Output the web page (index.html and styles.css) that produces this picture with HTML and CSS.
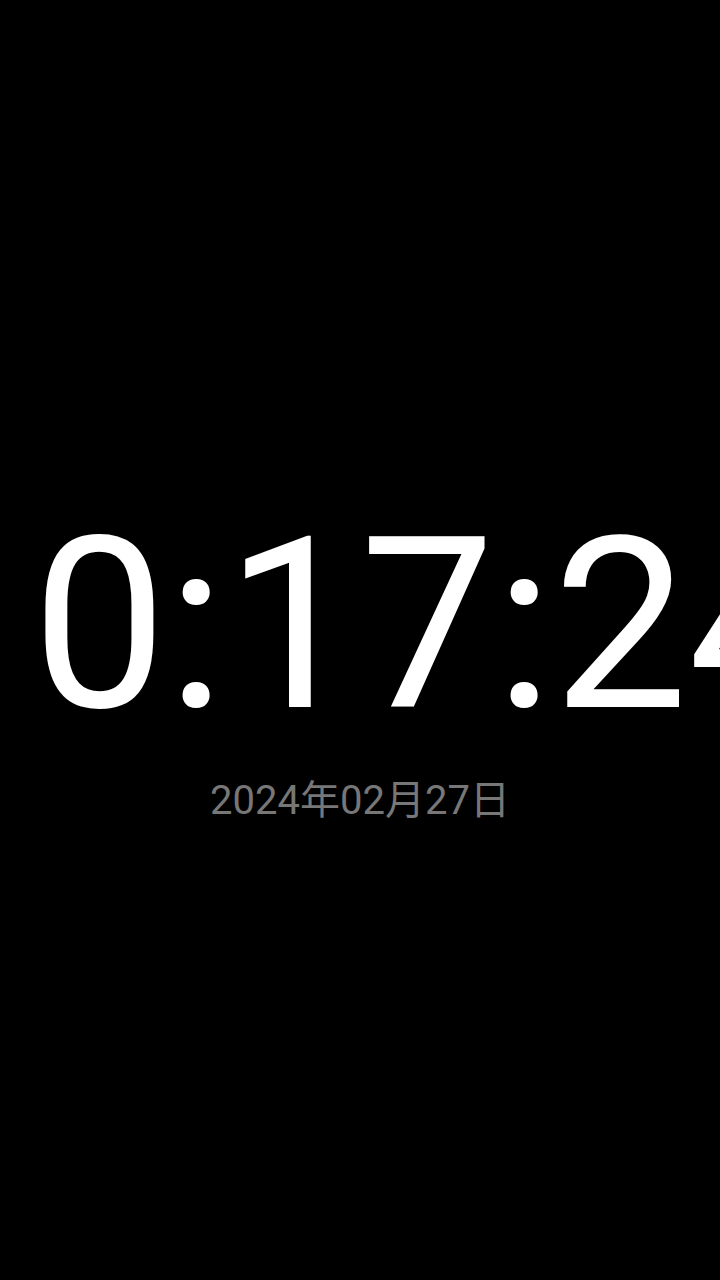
FILE: index.html
```html
<!DOCTYPE html>
<html lang="zh">
<head>
<meta charset="utf-8">
<title>Clock</title>
<link rel="stylesheet" href="styles.css">
</head>
<body>
<main class="screen">
  <div class="time-row">
    <div class="time">00:17:24</div>
  </div>
  <div class="date">2024年02月27日</div>
</main>
</body>
</html>
```

FILE: styles.css
```css
html, body {
  margin: 0;
  padding: 0;
  background: #000;
}
.screen {
  width: 720px;
  height: 1280px;
  box-sizing: border-box;
  padding-top: 505px;
  display: flex;
  flex-direction: column;
  align-items: center;
  overflow: hidden;
  background: #000;
  font-family: Roboto, "Noto Sans CJK SC", sans-serif;
}
.time-row {
  align-self: stretch;
  display: flex;
  justify-content: center;
  clip-path: inset(0 0 0 32px);
}
.time {
  flex: none;
  font-size: 240px;
  line-height: 240px;
  color: #fff;
  white-space: nowrap;
}
.date {
  margin-top: 36px;
  font-size: 40px;
  line-height: 40px;
  color: #777;
  white-space: nowrap;
}
```
